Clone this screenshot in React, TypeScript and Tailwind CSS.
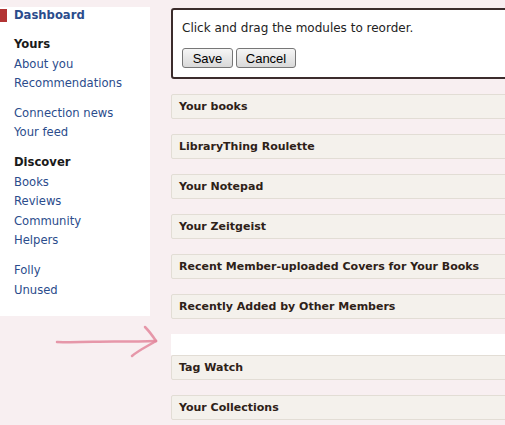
import React from 'react';

type NavGroup = {
  title?: string;
  items: string[];
};

const groups: NavGroup[] = [
  { title: 'Yours', items: ['About you', 'Recommendations'] },
  { items: ['Connection news', 'Your feed'] },
  { title: 'Discover', items: ['Books', 'Reviews', 'Community', 'Helpers'] },
  { items: ['Folly', 'Unused'] },
];

const modulesTop = [
  'Your books',
  'LibraryThing Roulette',
  'Your Notepad',
  'Your Zeitgeist',
  'Recent Member-uploaded Covers for Your Books',
  'Recently Added by Other Members',
];

function ModuleBar({ title }: { title: string }) {
  return (
    <div className="h-[25px] border border-[#e2ddd5] rounded-[2px] bg-[#f4f1ec] pl-[7px] pt-[2px] flex items-center text-[11px] font-bold text-[#2e2118]">
      {title}
    </div>
  );
}

function Sidebar() {
  return (
    <div className="w-[150px] shrink-0 bg-white pb-[16px] text-[11.6px] text-[#2b4c8c]">
      {/* current page */}
      <div className="flex items-center h-[16px]">
        <div className="w-[7px] h-[13px] bg-[#b23434]" />
        <span className="ml-[7px] font-bold leading-[16px]">Dashboard</span>
      </div>
      {groups.map((g, i) => (
        <div key={i} className={`pl-[14px] leading-[19.6px] ${i === 0 ? 'mt-[12px]' : 'mt-[10px]'}`}>
          {g.title && <div className="font-bold text-[#1a1a1a]">{g.title}</div>}
          {g.items.map((item) => (
            <div key={item}>{item}</div>
          ))}
        </div>
      ))}
    </div>
  );
}

export default function App() {
  return (
    <div
      className="relative w-[505px] h-[425px] overflow-hidden bg-[#f8eff1]"
      style={{ fontFamily: '"DejaVu Sans", Verdana, sans-serif' }}
    >
      <div className="flex items-start pt-[7px]">
        <Sidebar />
        <div className="ml-[21px] mt-[1px] w-[400px] shrink-0">
          <div className="border-2 border-[#3b2c2c] rounded-[3px] bg-white px-[9px] pt-[10px] pb-[9px]">
            <div className="text-[12px] leading-[16px] text-[#222]">Click and drag the modules to reorder.</div>
            <div className="flex gap-[3px] mt-[12px] text-[13px] text-black" style={{ fontFamily: '"Liberation Sans", Arial, sans-serif' }}>
              <button className="w-[51px] h-[20px] border border-[#777] rounded-[3px] bg-gradient-to-b from-[#f6f6f6] to-[#d9d9d9]">Save</button>
              <button className="w-[60px] h-[20px] border border-[#777] rounded-[3px] bg-gradient-to-b from-[#f6f6f6] to-[#d9d9d9]">Cancel</button>
            </div>
          </div>
          <div className="flex flex-col gap-[15px] mt-[15px]">
            {modulesTop.map((m) => (
              <ModuleBar key={m} title={m} />
            ))}
            <div>
              <div className="h-[21px] bg-white" />
              <ModuleBar title="Tag Watch" />
            </div>
            <ModuleBar title="Your Collections" />
          </div>
        </div>
      </div>
      {/* hand-drawn arrow pointing at the drop spot */}
      <svg className="absolute left-0 top-0 pointer-events-none" width="505" height="425">
        <g fill="none" stroke="#e3879c" strokeWidth="2.5" strokeLinecap="round" strokeOpacity="0.85">
          <path d="M57 342 C 80 343, 100 341, 120 341.5 S 148 341, 156 341" />
          <path d="M145 327 C 149 331, 152 335, 156 341" />
          <path d="M156 341 C 148 346, 139 350, 132 356" />
        </g>
      </svg>
    </div>
  );
}
